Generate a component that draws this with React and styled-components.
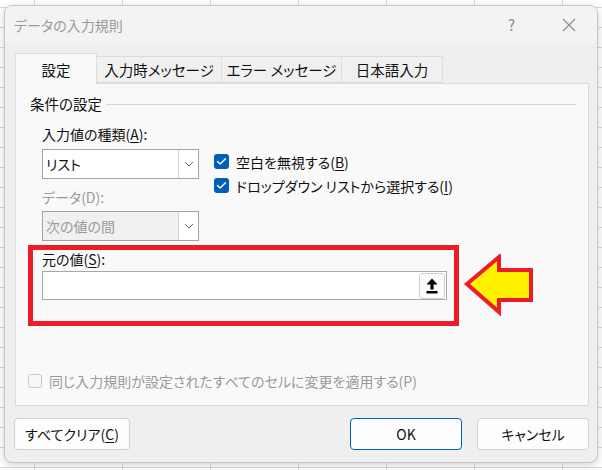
import React from 'react'
import styled, { createGlobalStyle } from 'styled-components'

const GlobalStyle = createGlobalStyle`
  html, body {
    margin: 0;
    padding: 0;
  }
  body {
    width: 602px;
    height: 470px;
    overflow: hidden;
    background-color: #fff;
    background-image:
      linear-gradient(to right, #dadada 1px, transparent 1px),
      linear-gradient(to bottom, #dadada 1px, transparent 1px);
    background-size: 88px 100%, 100% 20px;
    background-position: 34px 0, 0 7px;
    font-family: "Noto Sans CJK JP", "Noto Sans", sans-serif;
    font-feature-settings: "palt";
    color: #111;
  }
`

const Screen = styled.div`
  padding: 5px 4px 0 4px;
`

const Dialog = styled.div`
  width: 594px;
  height: 458px;
  box-sizing: border-box;
  border: 1px solid #c6c6c6;
  border-radius: 8px;
  background: #efefef;
  box-shadow: 0 2px 8px rgba(0,0,0,0.18);
  display: flex;
  flex-direction: column;
  overflow: hidden;
`

const TitleBar = styled.div`
  height: 37px;
  background: #f3f3f3;
  display: flex;
  align-items: center;
  padding-left: 9px;
  font-size: 14px;
  color: #9a9a9a;
`

const TitleText = styled.div`
  flex: 1;
`

const TitleButton = styled.div`
  width: 57px;
  height: 37px;
  display: flex;
  align-items: center;
  justify-content: center;
  color: #8c8c8c;
  font-size: 15px;
`

const Body = styled.div`
  flex: 1;
  display: flex;
  flex-direction: column;
  padding: 10px 8px 0 10px;
`

const TabRow = styled.div`
  display: flex;
  align-items: flex-end;
  height: 30px;
`

const Tab = styled.div`
  box-sizing: border-box;
  height: ${p => (p.$active ? '31px' : '27px')};
  margin-bottom: ${p => (p.$active ? '-1px' : '0')};
  width: ${p => p.$w}px;
  display: flex;
  align-items: center;
  justify-content: center;
  font-size: 14.5px;
  color: #111;
  background: ${p => (p.$active ? '#f9f9f9' : '#f0f0f0')};
  border: 1px solid #dcdcdc;
  border-bottom: ${p => (p.$active ? 'none' : '1px solid #dcdcdc')};
  border-left: ${p => (p.$first ? '1px solid #dcdcdc' : 'none')};
  position: relative;
  z-index: ${p => (p.$active ? 2 : 1)};
`

const Panel = styled.div`
  box-sizing: border-box;
  height: 323px;
  width: 574px;
  background: #f9f9f9;
  border: 1px solid #dcdcdc;
  display: flex;
  flex-direction: column;
  padding: 10px 12px 17px 12px;
`

const GroupHeader = styled.div`
  display: flex;
  align-items: center;
  gap: 4px;
  font-size: 14.5px;
  padding-left: 2px;
  height: 18px;
  &::after {
    content: '';
    flex: 1;
    height: 1px;
    background: #d4d4d4;
    margin-top: 3px;
  }
`

const Fields = styled.div`
  display: flex;
  gap: 15px;
  padding-left: 14px;
  margin-top: 12px;
`

const FieldColumn = styled.div`
  width: 157px;
  display: flex;
  flex-direction: column;
`

const Label = styled.div`
  font-size: 14px;
  height: 20px;
  line-height: 20px;
  color: ${p => (p.$disabled ? '#9a9a9a' : '#111')};
  margin-bottom: ${p => p.$mb || 0}px;
  u {
    text-underline-offset: 2px;
  }
`

const Select = styled.div`
  box-sizing: border-box;
  height: 30px;
  border: 1px solid #a3a3a3;
  background: ${p => (p.$disabled ? '#f0f0f0' : '#fff')};
  color: ${p => (p.$disabled ? '#9a9a9a' : '#111')};
  display: flex;
  font-size: 14px;
  margin-bottom: ${p => p.$mb || 0}px;
`

const SelectValue = styled.div`
  flex: 1;
  display: flex;
  align-items: center;
  padding-left: 3px;
`

const SelectArrow = styled.div`
  width: 19px;
  border-left: 1px solid #d6d6d6;
  display: flex;
  align-items: center;
  justify-content: center;
  background: #fff;
`

const CheckColumn = styled.div`
  display: flex;
  flex-direction: column;
  gap: 9px;
  padding-top: 30px;
`

const CheckRow = styled.div`
  display: flex;
  align-items: center;
  gap: 7px;
  font-size: 14px;
  height: 15px;
  color: ${p => (p.$disabled ? '#9a9a9a' : '#111')};
  u {
    text-underline-offset: 2px;
  }
`

const CheckBox = styled.div`
  box-sizing: border-box;
  width: ${p => (p.$checked ? 15 : 14)}px;
  height: ${p => (p.$checked ? 15 : 14)}px;
  border-radius: 3px;
  background: ${p => (p.$checked ? '#005fb8' : '#f6f6f6')};
  border: ${p => (p.$checked ? 'none' : '1px solid #c8c8c8')};
  display: flex;
  align-items: center;
  justify-content: center;
  flex-shrink: 0;
`

const SourceRow = styled.div`
  display: flex;
  align-items: center;
  margin-top: 4px;
`

const RedFrame = styled.div`
  box-sizing: border-box;
  width: 431px;
  height: 81px;
  border: 5px solid #ee1c25;
  padding: 0 8px 0 9px;
  display: flex;
  flex-direction: column;
`

const SourceLabel = styled(Label)`
  height: 18px;
  line-height: 18px;
  margin-bottom: 3px;
`

const InputBox = styled.div`
  box-sizing: border-box;
  width: 405px;
  height: 29px;
  border: 1px solid #a8a8a8;
  background: #fff;
  display: flex;
  justify-content: flex-end;
  align-items: center;
  padding-right: 1px;
`

const CollapseButton = styled.div`
  box-sizing: border-box;
  width: 26px;
  height: 26px;
  border: 1px solid #cfcfcf;
  border-radius: 3px;
  background: #fbfbfb;
  display: flex;
  align-items: center;
  justify-content: center;
`

const ArrowMark = styled.svg`
  margin-left: 4px;
  flex-shrink: 0;
`

const Spacer = styled.div`
  flex: 1;
`

const Footer = styled.div`
  display: flex;
  align-items: center;
  padding: 12px 0 0 0;
  margin-left: -1px;
`

const Button = styled.div`
  box-sizing: border-box;
  width: ${p => p.$w}px;
  height: 32px;
  border-radius: 4px;
  border: 1px solid ${p => (p.$primary ? '#005fb8' : '#d0d0d0')};
  background: #fdfdfd;
  display: flex;
  align-items: center;
  justify-content: center;
  font-size: 14px;
  color: #111;
  margin-left: ${p => p.$ml || 0}px;
  u {
    text-underline-offset: 2px;
  }
`

const Chevron = () => (
  <svg width="10" height="6" viewBox="0 0 10 6">
    <path d="M1 1 L5 5 L9 1" fill="none" stroke="#6a6a6a" strokeWidth="1" />
  </svg>
)

const Check = () => (
  <svg width="11" height="9" viewBox="0 0 11 9">
    <path d="M1.5 4.5 L4.2 7 L9.5 1.8" fill="none" stroke="#fff" strokeWidth="1.4" strokeLinecap="round" strokeLinejoin="round" />
  </svg>
)

export default function App() {
  return (
    <>
      <GlobalStyle />
      <Screen>
        <Dialog>
          <TitleBar>
            <TitleText>データの入力規則</TitleText>
            <TitleButton>?</TitleButton>
            <TitleButton>
              <svg width="14" height="14" viewBox="0 0 14 14">
                <path d="M1 1 L13 13 M13 1 L1 13" stroke="#8a8a8a" strokeWidth="1.1" />
              </svg>
            </TitleButton>
          </TitleBar>
          <Body>
            <TabRow>
              <Tab $active $first $w={82}>設定</Tab>
              <Tab $w={125}>入力時メッセージ</Tab>
              <Tab $w={120}>エラー メッセージ</Tab>
              <Tab $w={101}>日本語入力</Tab>
            </TabRow>
            <Panel>
              <GroupHeader>条件の設定</GroupHeader>
              <Fields>
                <FieldColumn>
                  <Label $mb={5}>入力値の種類(<u>A</u>):</Label>
                  <Select $mb={8}>
                    <SelectValue>リスト</SelectValue>
                    <SelectArrow><Chevron /></SelectArrow>
                  </Select>
                  <Label $disabled $mb={4}>データ(D):</Label>
                  <Select $disabled>
                    <SelectValue>次の値の間</SelectValue>
                    <SelectArrow><Chevron /></SelectArrow>
                  </Select>
                </FieldColumn>
                <CheckColumn>
                  <CheckRow>
                    <CheckBox $checked><Check /></CheckBox>
                    <span>空白を無視する(<u>B</u>)</span>
                  </CheckRow>
                  <CheckRow>
                    <CheckBox $checked><Check /></CheckBox>
                    <span>ドロップダウン リストから選択する(<u>I</u>)</span>
                  </CheckRow>
                </CheckColumn>
              </Fields>
              <SourceRow>
                <RedFrame>
                  <SourceLabel>元の値(<u>S</u>):</SourceLabel>
                  <InputBox>
                    <CollapseButton>
                      <svg width="12" height="16" viewBox="0 0 12 16">
                        <path d="M6 0.5 L11.5 6.5 L7.6 6.5 L7.6 11.5 L4.4 11.5 L4.4 6.5 L0.5 6.5 Z" fill="#000" />
                        <rect x="0.5" y="13" width="11" height="2.5" fill="#000" />
                      </svg>
                    </CollapseButton>
                  </InputBox>
                </RedFrame>
                <ArrowMark width="72" height="64" viewBox="0 0 72 64">
                  <path
                    d="M4 30 L36 3 L36 16 L68 16 L68 46 L36 46 L36 58 Z"
                    fill="#fff200"
                    stroke="#ee1c25"
                    strokeWidth="4"
                    strokeLinejoin="miter"
                  />
                </ArrowMark>
              </SourceRow>
              <Spacer />
              <CheckRow $disabled>
                <CheckBox />
                <span>同じ入力規則が設定されたすべてのセルに変更を適用する(P)</span>
              </CheckRow>
            </Panel>
            <Footer>
              <Button $w={116}>すべてクリア(<u>C</u>)</Button>
              <Spacer />
              <Button $primary $w={112}>OK</Button>
              <Button $w={112} $ml={15}>キャンセル</Button>
            </Footer>
          </Body>
        </Dialog>
      </Screen>
    </>
  )
}
